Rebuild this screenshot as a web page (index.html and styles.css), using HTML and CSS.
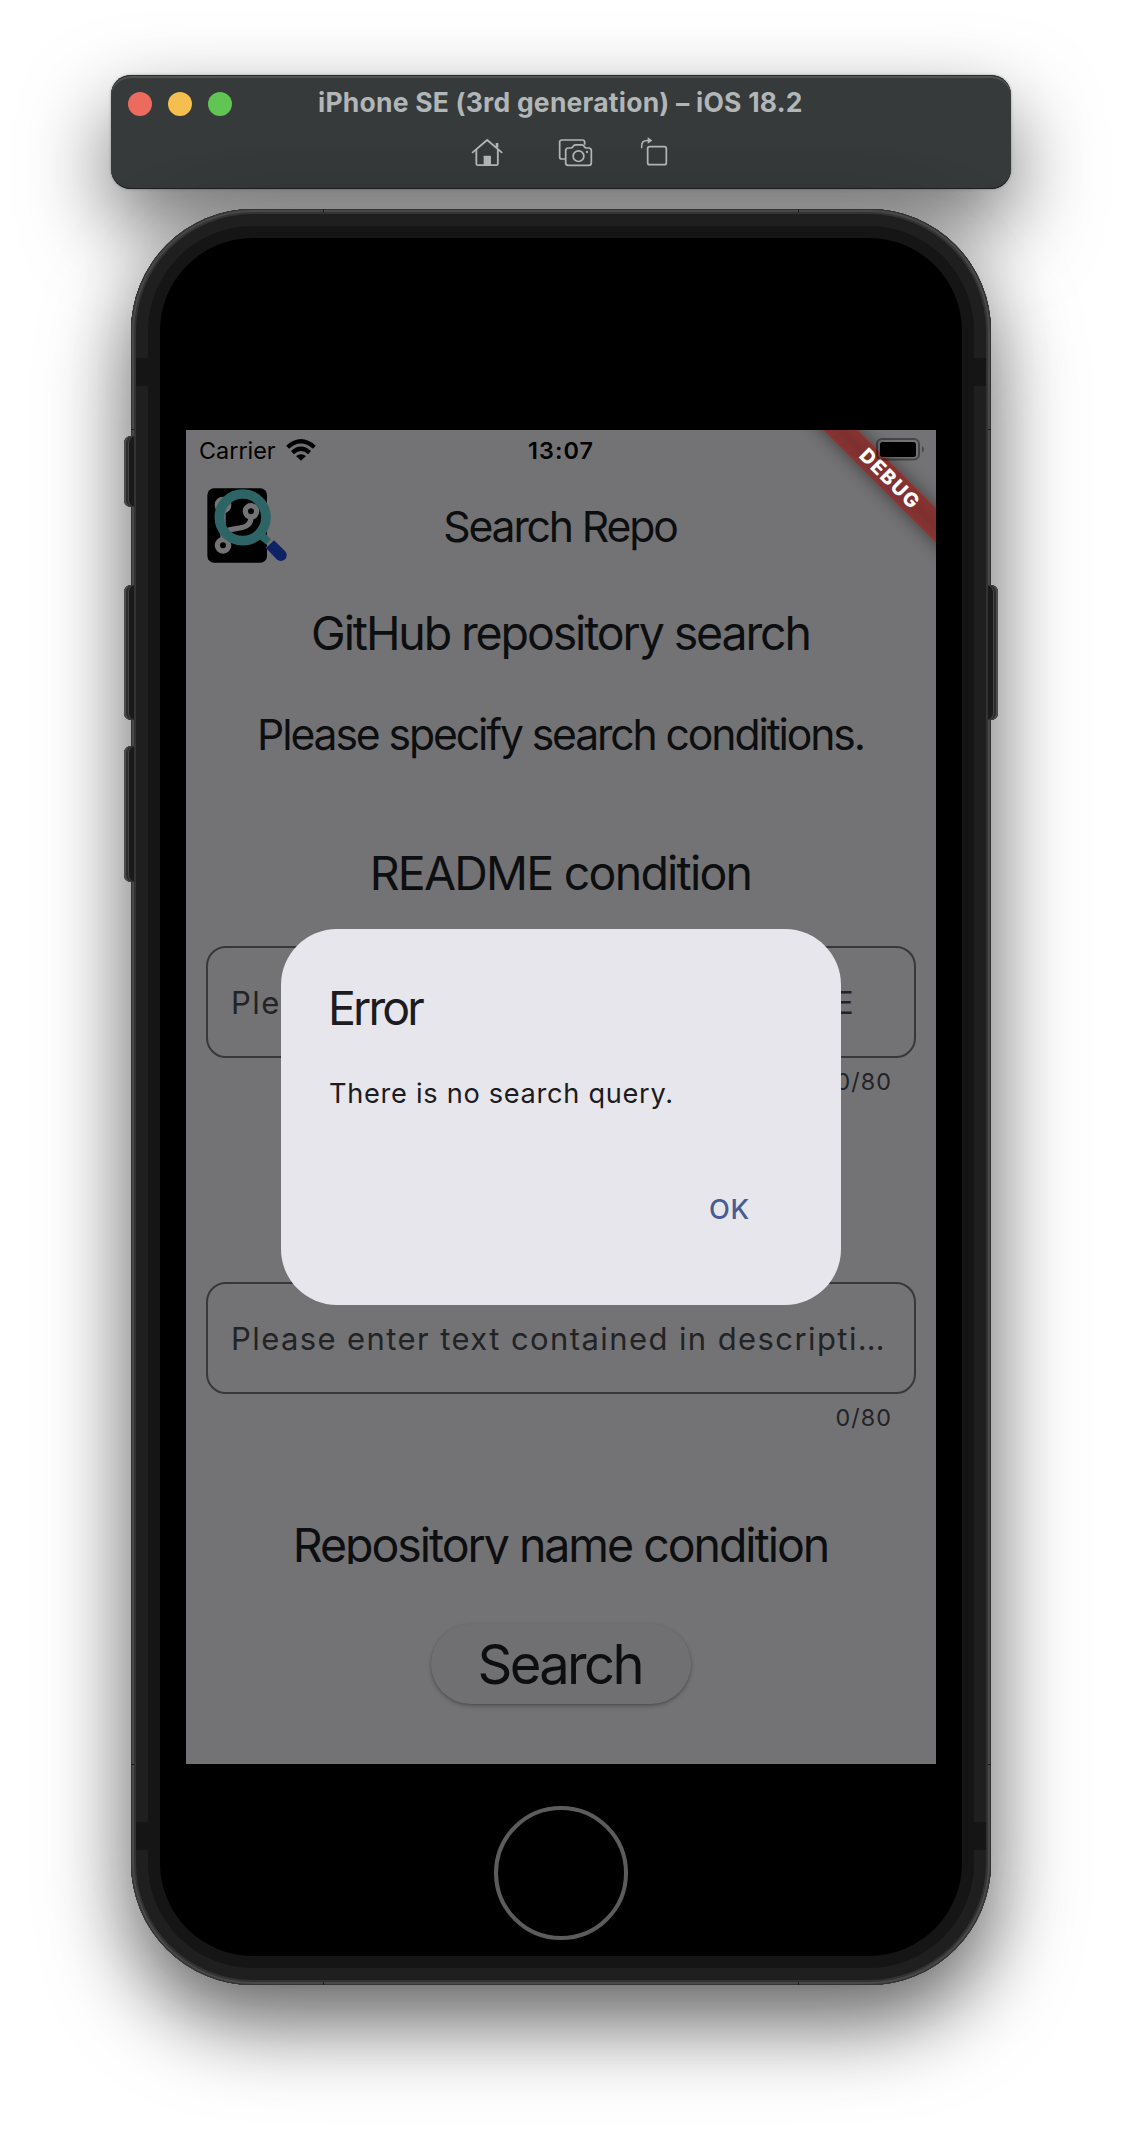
FILE: index.html
```html
<!DOCTYPE html>
<html lang="en">
<head>
<meta charset="utf-8">
<title>iPhone SE (3rd generation) – iOS 18.2</title>
<link rel="stylesheet" href="styles.css">
</head>
<body>
<div class="desktop">
  <header class="window-bar">
    <div class="title-row">
      <div class="lights">
        <span class="light light-close"></span>
        <span class="light light-min"></span>
        <span class="light light-max"></span>
      </div>
      <div class="window-title">iPhone SE (3rd generation) – iOS 18.2</div>
    </div>
    <div class="tools">
      <svg class="tool tool-home" viewBox="60 21 102 93" fill="none" stroke="#b2b6b7" stroke-width="5.500" stroke-linecap="round" stroke-linejoin="round">
        <path d="M68 67 L111.500 30 L155 67"/>
        <path d="M79 60 V101 Q79 105.500 83.500 105.500 H139 Q143.500 105.500 143.500 101 V60"/>
        <path d="M141 39 V53" stroke-width="8" stroke-linecap="butt"/>
        <path d="M101 106 V79 Q101 77 103 77 H121 Q123 77 123 79 V106 Z" fill="#b2b6b7" stroke="none"/>
      </svg>
      <svg class="tool tool-camera" viewBox="321 21 111 93" fill="none" stroke="#b2b6b7" stroke-width="5.200" stroke-linejoin="round" stroke-linecap="round">
        <path d="M344 87 H335 Q329 87 329 81 V37 Q329 30 336 30 H397 Q404 30 404 37 V42"/>
        <path d="M355 54 H363 Q366 54 368 51 L371 47 Q373 44.500 377 44.500 H395 Q399 44.500 401 47 L404 51 Q406 54 409 54 H416 Q424 54 424 62 V98 Q424 106 416 106 H355 Q347 106 347 98 V62 Q347 54 355 54 Z"/>
        <circle cx="385.500" cy="78.500" r="16"/>
        <circle cx="411" cy="66" r="3.500" fill="#b2b6b7" stroke="none"/>
      </svg>
      <svg class="tool tool-rotate" viewBox="567 21 90 93" fill="none" stroke="#b2b6b7" stroke-width="5.200" stroke-linejoin="round">
        <rect x="593" y="50" width="56" height="54" rx="6"/>
        <path d="M575 55 V48 Q575 31.500 591 31.500 H596" stroke-width="4.500"/>
        <path d="M593 22 L607 31.500 L593 41 Z" fill="#b2b6b7" stroke="none"/>
      </svg>
    </div>
  </header>

  <div class="phone">
    <svg class="frame-lines" viewBox="0 0 860 1776">
      <g fill="#151515">
        <rect x="5" y="149" width="12" height="28"/><rect x="843" y="149" width="12" height="28"/>
        <rect x="5" y="1613" width="12" height="28"/><rect x="843" y="1613" width="12" height="28"/>
      </g>
      <g fill="#1c1c1c">
        <rect x="192" y="0" width="1" height="3"/><rect x="667" y="0" width="1" height="3"/>
        <rect x="192" y="1773" width="1" height="3"/><rect x="667" y="1773" width="1" height="3"/>
        <rect x="0" y="220" width="3" height="1"/><rect x="857" y="220" width="3" height="1"/>
        <rect x="0" y="1555" width="3" height="1"/><rect x="857" y="1555" width="3" height="1"/>
      </g>
    </svg>
    <span class="key key-left key-mute"></span>
    <span class="key key-left key-up"></span>
    <span class="key key-left key-down"></span>
    <span class="key key-right key-power"></span>

    <main class="screen">
      <div class="status">
        <div class="carrier">Carrier
          <svg class="wifi" viewBox="0 0 30 22" fill="none" stroke="#000" stroke-width="4.200">
            <path d="M1.600 8.300 Q15 -3.700 28.400 8.300"/>
            <path d="M6.400 13.600 Q15 6 23.600 13.600"/>
            <path d="M15 21.700 L10 17 Q15 13.300 20 17 Z" fill="#000" stroke="none"/>
          </svg>
        </div>
        <div class="clock">13:07</div>
        <svg class="battery" viewBox="0 0 49 23">
          <rect x="1" y="1" width="42" height="20.500" rx="5" fill="none" stroke="#000" stroke-opacity=".4" stroke-width="2"/>
          <rect x="4" y="4" width="36" height="15" rx="2.500"/>
          <path d="M46 8 Q48 9 48 11.300 Q48 13.600 46 14.600 Z" fill-opacity=".4"/>
        </svg>
      </div>

      <div class="app-bar">
        <svg class="logo" viewBox="80 204 240 226">
          <rect x="81" y="205" width="179" height="223" rx="20" fill="#000"/>
          <g fill="none" stroke="#737375" stroke-width="16">
            <circle cx="128" cy="255" r="17"/>
            <circle cx="212" cy="274" r="17"/>
            <circle cx="128" cy="376" r="17"/>
            <path d="M128 272 V359 M129 348 C134 310 212 344 212 291"/>
          </g>
          <circle cx="187" cy="292" r="70" fill="none" stroke="#2d6466" stroke-width="29"/>
          <path d="M236 356 L254 340 L272 358 L258 374 Z" fill="#2d6466"/>
          <path d="M258 384 L282 361" stroke="#737375" stroke-width="4"/>
          <path d="M257 384 L281 361 L314 393 A17 17 0 0 1 289 418 Z" fill="#0f2266"/>
        </svg>
        <div class="app-title">Search Repo</div>
      </div>

      <section class="content">
        <h1 class="heading">GitHub repository search</h1>
        <p class="lead">Please specify search conditions.</p>
        <h2 class="heading heading-readme">README condition</h2>
        <div class="field"><span class="hint">Please enter text contained in README</span></div>
        <div class="counter">0/80</div>
        <h2 class="heading heading-next">Description condition</h2>
        <div class="field"><span class="hint">Please enter text contained in descripti…</span></div>
        <div class="counter">0/80</div>
        <h2 class="heading heading-next">Repository name condition</h2>
      </section>

      <footer class="actions"><button class="search">Search</button></footer>

      <div class="dialog">
        <h3 class="dialog-title">Error</h3>
        <p class="dialog-text">There is no search query.</p>
        <button class="dialog-ok">OK</button>
      </div>
      <div class="ribbon">DEBUG</div>
    </main>

    <div class="home-button"></div>
  </div>
</div>
</body>
</html>
```
FILE: styles.css
```css
* { box-sizing: border-box; margin: 0; padding: 0; }
body { background: #fff; font-family: Inter, "Liberation Sans", sans-serif; }
button { border: 0; background: none; font: inherit; }
h1, h2, h3 { font-weight: 400; }

.desktop {
  width: 1122px;
  height: 2134px;
  padding: 75px 0 0 0;
  display: flex;
  flex-direction: column;
  align-items: center;
  overflow: hidden;
}

/* Simulator window bar */
.window-bar {
  width: 900px;
  height: 114px;
  flex: none;
  border-radius: 20px;
  background: #363a3b;
  box-shadow: inset 0 1px 0 #2a2d2e, inset 0 3px 0 #505455, inset 0 -1px 0 #1e2021,
    0 36px 84px rgba(0, 0, 0, .56), 0 0 3px rgba(0, 0, 0, .3);
}
.title-row {
  height: 55px;
  padding: 2px 18px 0 17px;
  display: grid;
  grid-template-columns: 190px 1fr 190px;
  align-items: center;
}
.lights { display: flex; gap: 16px; }
.light { width: 24px; height: 24px; border-radius: 50%; }
.light-close { background: #ed6a5e; }
.light-min { background: #f5bf4f; }
.light-max { background: #61c554; }
.window-title {
  margin: -3px 1px 0 0;
  text-align: center;
  color: #b2b6b7;
  font-size: 26.5px;
  font-weight: 700;
  letter-spacing: .22px;
  line-height: 52px;
  white-space: nowrap;
}
.tools { display: flex; padding: 7px 0 0 359px; }
.tool { height: 31px; overflow: visible; }
.tool-home { width: 34px; margin-right: 53px; }
.tool-camera { width: 37px; margin-right: 45px; }
.tool-rotate { width: 30px; }

/* Device body */
.phone {
  position: relative;
  width: 860px;
  height: 1776px;
  flex: none;
  margin-top: 20px;
  padding-top: 221px;
  border-radius: 122px;
  display: flex;
  flex-direction: column;
  align-items: center;
  background: #000;
  box-shadow: inset 0 0 0 1px #333, inset 0 0 0 3px #484848, inset 0 0 0 5px #333,
    inset 0 0 0 17px #1f1f1f, inset 0 0 0 29px #151515,
    0 38px 84px rgba(0, 0, 0, .6), 0 0 80px rgba(0, 0, 0, .06);
}
.frame-lines { position: absolute; left: 0; top: 0; width: 860px; height: 1776px; }
.key {
  position: absolute;
  width: 10px;
  background: #1a1a1a;
}
.key-left {
  left: -7px;
  border-radius: 7px 0 0 7px;
  box-shadow: inset 2px 0 0 #4c4c4c, inset 4px 0 0 #2c2c2c, inset 5px 0 0 #444;
}
.key-right {
  right: -7px;
  border-radius: 0 7px 7px 0;
  box-shadow: inset -2px 0 0 #4c4c4c, inset -4px 0 0 #2c2c2c, inset -5px 0 0 #444;
}
.key-mute { top: 227px; height: 71px; }
.key-up, .key-power { top: 376px; height: 135px; }
.key-down { top: 537px; height: 136px; }
.home-button {
  width: 134px;
  height: 134px;
  margin-top: 42px;
  border: 4px solid #5c5c5c;
  border-radius: 50%;
}

/* App screen, dimmed by the modal barrier */
.screen {
  position: relative;
  width: 750px;
  height: 1334px;
  flex: none;
  display: flex;
  flex-direction: column;
  overflow: hidden;
  background: #737375;
  color: #0d0e10;
}
.status {
  position: relative;
  z-index: 3;
  height: 40px;
  padding: 0 13px;
  display: grid;
  grid-template-columns: 1fr auto 1fr;
  color: #000;
  font-size: 23.4px;
  line-height: 41px;
}
.carrier { display: flex; gap: 10px; }
.wifi { width: 30px; height: 22px; margin-top: 9px; }
.clock { font-weight: 600; letter-spacing: 1.1px; }
.battery { width: 49px; height: 23px; margin: 8px -2px 0 0; justify-self: end; }
.app-bar {
  height: 112px;
  padding: 0 21px;
  display: grid;
  grid-template-columns: 80px 1fr 80px;
}
.logo { width: 80px; height: 75.3px; margin-top: 18px; }
.app-title {
  text-align: center;
  font-size: 42.7px;
  letter-spacing: -2.15px;
  text-indent: -2.15px;
  line-height: 113px;
}
.content {
  height: 982px;
  padding: 19px 20px 0;
  overflow: hidden;
}
.heading {
  height: 64px;
  text-align: center;
  font-size: 46.5px;
  letter-spacing: -2.13px;
  text-indent: -1px;
  line-height: 65px;
}
.lead {
  margin-top: 40px;
  height: 60px;
  text-align: center;
  font-size: 42.7px;
  letter-spacing: -2.12px;
  text-indent: -1px;
  line-height: 60px;
}
.heading-readme { margin: 76px 0 41px; letter-spacing: -1.78px; }
.field {
  height: 112px;
  padding: 1px 22px 0 23px;
  border: 2px solid #38383a;
  border-radius: 20px;
  display: flex;
  align-items: center;
  color: #222326;
  font-size: 31px;
  letter-spacing: 1.41px;
  line-height: 41px;
  white-space: nowrap;
}
.counter {
  margin-top: 8px;
  height: 32px;
  padding-right: 24px;
  text-align: right;
  color: #222326;
  font-size: 23.3px;
  letter-spacing: 1.1px;
  line-height: 32px;
}
.heading-next { margin: 79px 0 41px; letter-spacing: -2.05px; }
.actions {
  height: 200px;
  display: flex;
  align-items: center;
  justify-content: center;
}
.search {
  width: 260px;
  height: 80px;
  border-radius: 40px;
  background: #707072;
  box-shadow: 0 2px 4px rgba(0, 0, 0, .26), 0 1px 2px rgba(0, 0, 0, .1);
  color: #0d0e10;
  font-size: 54.3px;
  letter-spacing: -2.6px;
  text-indent: -2.6px;
  line-height: 81px;
}

/* Error dialog */
.dialog {
  position: absolute;
  left: 95px;
  top: 499px;
  width: 560px;
  height: 376px;
  padding: 47px 48px 0;
  border-radius: 56px;
  background: #e8e6ed;
  color: #1b1b21;
  display: flex;
  flex-direction: column;
}
.dialog-title { font-size: 46.5px; letter-spacing: -2.9px; line-height: 65px; margin-left: -1px; }
.dialog-text { margin-top: 33px; font-size: 27.2px; letter-spacing: .7px; line-height: 40px; }
.dialog-ok {
  align-self: flex-end;
  margin: 76px 43px 0 0;
  color: #475d92;
  font-size: 27.2px;
  font-weight: 500;
  letter-spacing: .7px;
  line-height: 40px;
}

/* Debug ribbon across the corner */
.ribbon {
  position: absolute;
  z-index: 2;
  right: -73px;
  top: 36px;
  width: 240px;
  height: 25px;
  transform: rotate(45deg);
  background: linear-gradient(#863534, #7e2f2e 50%, #863534);
  box-shadow: 0 0 18px rgba(0, 0, 0, .45);
  color: #fff;
  font-size: 19.8px;
  font-weight: 800;
  letter-spacing: 1.6px;
  text-indent: 2px;
  line-height: 25px;
  text-align: center;
}
```
